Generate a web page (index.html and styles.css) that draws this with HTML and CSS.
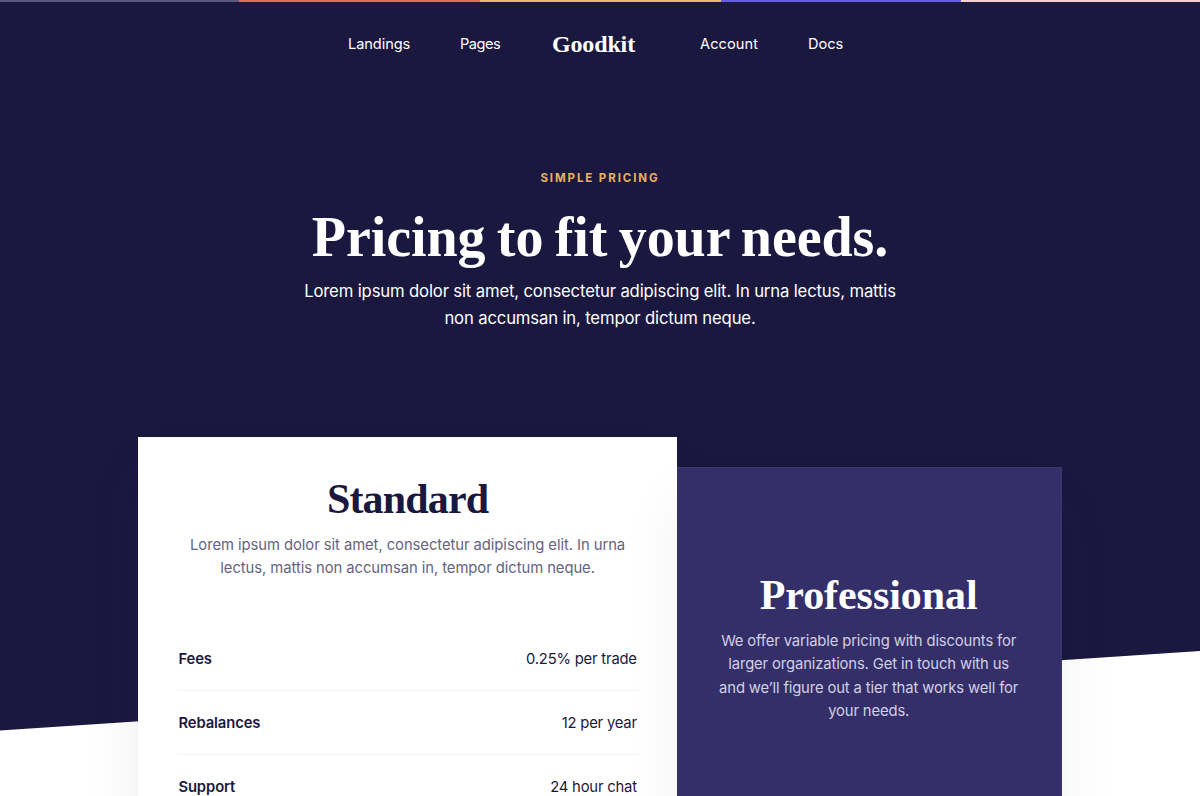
FILE: index.html
```html
<!DOCTYPE html>
<html lang="en">
<head>
<meta charset="utf-8">
<title>Goodkit – Pricing</title>
<link rel="stylesheet" href="styles.css">
</head>
<body>
<div class="page">
  <div class="stripe"><i class="s1"></i><i class="s2"></i><i class="s3"></i><i class="s4"></i><i class="s5"></i></div>
  <svg class="backdrop" viewBox="0 0 1200 796" preserveAspectRatio="none" aria-hidden="true"><path d="M0 0H1200V651L0 730.5Z" fill="#1b1840"/></svg>
  <nav class="nav">
    <a class="link landings">Landings</a>
    <a class="link pages">Pages</a>
    <a class="brand">Goodkit</a>
    <a class="link account">Account</a>
    <a class="link docs">Docs</a>
  </nav>
  <header class="hero">
    <div class="eyebrow">Simple pricing</div>
    <h1 class="title">Pricing to fit your needs.</h1>
    <p class="lead">Lorem ipsum dolor sit amet, consectetur adipiscing elit. In urna lectus, mattis<br>non accumsan in, tempor dictum neque.</p>
  </header>
  <main class="plans">
    <section class="card standard">
      <h2 class="name">Standard</h2>
      <p class="text">Lorem ipsum dolor sit amet, consectetur adipiscing elit. In urna<br>lectus, mattis non accumsan in, tempor dictum neque.</p>
      <div class="rows">
        <div class="row"><b>Fees</b><span>0.25% per trade</span></div>
        <div class="row"><b>Rebalances</b><span>12 per year</span></div>
        <div class="row"><b>Support</b><span>24 hour chat</span></div>
      </div>
    </section>
    <section class="card professional">
      <h2 class="name">Professional</h2>
      <p class="text">We offer variable pricing with discounts for<br>larger organizations. Get in touch with us<br>and we’ll figure out a tier that works well for<br>your needs.</p>
    </section>
  </main>
</div>
</body>
</html>
```
FILE: styles.css
```css
* { box-sizing: border-box; margin: 0; padding: 0; }
body { background: #fff; overflow: hidden; font-family: Inter, sans-serif; color: #1b1840; }
.page { position: relative; height: 796px; overflow: hidden; display: flex; flex-direction: column; }
.backdrop { position: absolute; top: 0; left: 0; width: 100%; height: 796px; z-index: -1; }
.stripe { display: grid; grid-template-columns: 239px 241px 240.5px 240.5px 1fr; height: 2px; flex: none; }
.s1 { background: #5a577c; }
.s2 { background: #e66a62; }
.s3 { background: #e5bb78; }
.s4 { background: #675fe3; }
.s5 { background: #f6ced3; }

.nav { display: grid; grid-template-columns: 112px 92px 148px 108px 40px; height: 84px; margin-left: 348px; align-items: center; color: #fff; flex: none; white-space: nowrap; }
.link { font-size: 14.6px; padding-bottom: 1px; }
.landings { letter-spacing: -.07px; }
.pages { letter-spacing: -.5px; }
.account { letter-spacing: .08px; }
.brand { font-family: "Liberation Serif", serif; font-weight: 700; font-size: 24px; letter-spacing: -.15px; }

.hero { height: 351px; padding-top: 82px; text-align: center; color: #fff; flex: none; white-space: nowrap; }
.eyebrow { font-size: 11.5px; line-height: 20px; font-weight: 700; letter-spacing: 1.9px; text-transform: uppercase; color: #e9b15e; }
.title { font-family: "Liberation Serif", serif; font-weight: 700; font-size: 56px; line-height: 64px; letter-spacing: -.08px; word-spacing: -2.5px; margin-top: 17px; }
.lead { font-size: 16.7px; line-height: 26.5px; letter-spacing: -.155px; margin-top: 9px; }

.plans { display: flex; margin-left: 138.4px; width: 923.2px; flex: 1; white-space: nowrap; }
.card { text-align: center; flex: none; }
.standard { width: 538.4px; height: 500px; padding: 39px 40px 0; background: #fff; box-shadow: 0 32px 56px rgba(27,24,64,.07); }
.professional { width: 384.8px; height: 500px; margin-top: 30px; padding-top: 104px; color: #fff; background: #342f69; border: 1px solid #3b366e; border-left: 0; box-shadow: 0 32px 56px rgba(27,24,64,.06); }
.name { font-family: "Liberation Serif", serif; font-weight: 700; font-size: 42px; line-height: 46px; }
.standard .name { letter-spacing: -.85px; }
.professional .name { letter-spacing: -.05px; }
.text { font-size: 14.8px; line-height: 23.4px; margin-top: 12px; }
.standard .text { color: #65637f; letter-spacing: -.06px; }
.professional .text { color: #d2d0e4; letter-spacing: -.13px; }
.rows { margin-top: 46.4px; }
.row { height: 64px; display: flex; justify-content: space-between; align-items: center; font-size: 14.8px; letter-spacing: -.2px; border-bottom: 1px solid #f4f4f6; }
.row b { font-weight: 600; letter-spacing: -.1px; }
```
